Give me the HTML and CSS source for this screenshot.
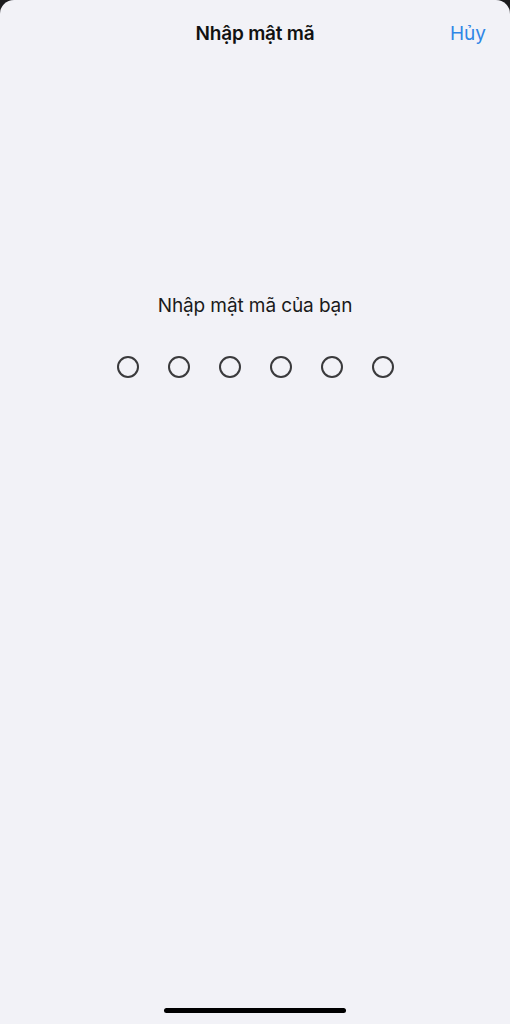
FILE: index.html
```html
<!DOCTYPE html>
<html lang="vi">
<head>
<meta charset="utf-8">
<link rel="stylesheet" href="styles.css">
</head>
<body>
<div class="sheet">
  <header class="nav">
    <div class="nav-side"></div>
    <h1 class="nav-title">Nhập mật mã</h1>
    <div class="nav-side nav-right"><span class="cancel">Hủy</span></div>
  </header>
  <main class="content">
    <p class="prompt">Nhập mật mã của bạn</p>
    <div class="dots">
      <span class="dot"></span><span class="dot"></span><span class="dot"></span><span class="dot"></span><span class="dot"></span><span class="dot"></span>
    </div>
  </main>
  <div class="home-bar"><span class="indicator"></span></div>
</div>
</body>
</html>
```
FILE: styles.css
```css
html, body {
  margin: 0;
  padding: 0;
  height: 100%;
  background: #1c1c1e;
}
.sheet {
  height: 1024px;
  background: #f2f2f7;
  border-radius: 14px 14px 0 0;
  display: flex;
  flex-direction: column;
  font-family: Inter, "Noto Sans", sans-serif;
  color: #111;
  box-sizing: border-box;
}
.nav {
  height: 66px;
  display: grid;
  grid-template-columns: 1fr auto 1fr;
  align-items: center;
  padding: 0 24px;
}
.nav-title {
  margin: 0;
  font-size: 19px;
  font-weight: 600;
  letter-spacing: -0.2px;
  color: #111;
}
.nav-right {
  text-align: right;
}
.cancel {
  color: #2f86e6;
  font-size: 19px;
}
.content {
  flex: 1;
  display: flex;
  flex-direction: column;
  align-items: center;
  padding-top: 228px;
}
.prompt {
  margin: 0;
  font-size: 19px;
  font-weight: 400;
  color: #1a1a1a;
  letter-spacing: -0.1px;
}
.dots {
  display: flex;
  gap: 29px;
  margin-top: 39px;
}
.dot {
  width: 18px;
  height: 18px;
  border: 2px solid #3a3a3c;
  border-radius: 50%;
}
.home-bar {
  height: 16px;
  display: flex;
  justify-content: center;
}
.indicator {
  width: 182px;
  height: 5px;
  border-radius: 3px;
  background: #000;
}
```
